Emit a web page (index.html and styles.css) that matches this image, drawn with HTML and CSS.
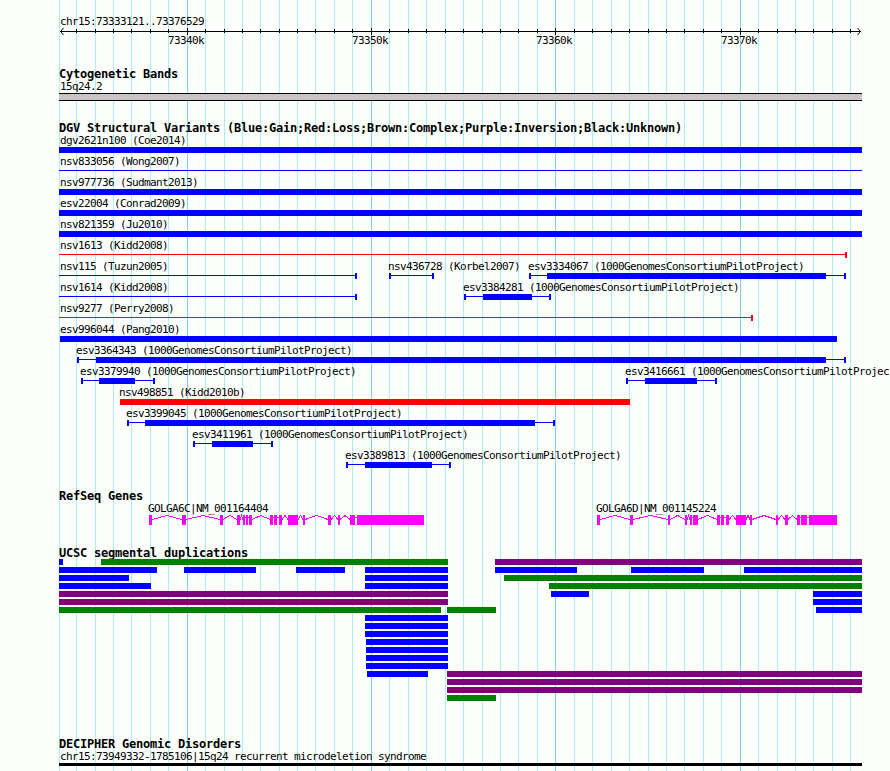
FILE: index.html
```html
<!DOCTYPE html>
<html lang="en">
<head>
    <meta charset="UTF-8">
    <title>chr15:73333121..73376529</title>
    <link rel="stylesheet" href="styles.css">
</head>
<body>
<div class="panel">
    <svg class="grid" id="grid" viewBox="59 0 830 771"></svg>

    <svg class="ruler" id="ruler" viewBox="59 0 830 68"></svg>

    <section class="track cytobands">
        <h2>Cytogenetic Bands</h2>
        <svg id="cytobands" viewBox="59 0 830 42"></svg>
    </section>

    <section class="track variants">
        <h2>DGV Structural Variants (Blue:Gain;Red:Loss;Brown:Complex;Purple:Inversion;Black:Unknown)</h2>
        <svg id="variants" viewBox="59 0 830 356"></svg>
    </section>

    <section class="track genes">
        <h2>RefSeq Genes</h2>
        <svg id="genes" viewBox="59 0 830 45"></svg>
    </section>

    <section class="track duplications">
        <h2>UCSC segmental duplications</h2>
        <svg id="duplications" viewBox="59 0 830 179"></svg>
    </section>

    <section class="track disorders">
        <h2>DECIPHER Genomic Disorders</h2>
        <svg id="disorders" viewBox="59 0 830 21"></svg>
    </section>
</div>
<script src="tracks.js"></script>
</body>
</html>
```
FILE: styles.css
```css
body {
    margin: 0;
    background: #fdfffc;
}

.panel {
    position: relative;
    box-sizing: border-box;
    width: 889px;
    height: 771px;
    padding-left: 59px;
    overflow: hidden;
}

svg {
    display: block;
    width: 830px;
    shape-rendering: crispEdges;
}

/* guide lines run behind every track */
.grid {
    position: absolute;
    top: 0;
    left: 59px;
    height: 771px;
}

.ruler {
    position: relative;
    height: 68px;
}

.track {
    position: relative;
    display: flex;
    flex-direction: column;
}

.track h2 {
    margin: 0;
    height: 12px;
    font: bold 12px/12px "DejaVu Sans Mono", monospace;
    letter-spacing: -0.225px;
    white-space: nowrap;
    color: #000;
}

.track svg {
    flex: 1;
}

.cytobands {
    height: 54px;
}

.variants {
    height: 368px;
}

.genes {
    height: 57px;
}

.duplications {
    height: 191px;
}

.disorders {
    height: 33px;
}

text {
    font: 11px "DejaVu Sans Mono", monospace;
    letter-spacing: -0.623px;
    fill: #000;
}

.minor {
    fill: #afeeee;
}

.major {
    fill: #87ceeb;
}

.band {
    fill: #c8c4c6;
}

.black {
    fill: #000;
}

.blue {
    fill: #00f;
}

.red {
    fill: #f00;
}

.green {
    fill: #008000;
}

.purple {
    fill: #800080;
}

.exon {
    fill: #f0f;
}

.intron {
    fill: none;
    stroke: #f0f;
}

.arrow {
    fill: none;
    stroke: #000;
    shape-rendering: auto;
}
```
FILE: tracks.js
```js
const LEFT = 59;
const RIGHT = 862;

const guides = [
    59, 76, 95, 113, 131, 150, 168, 187, 205, 224, 242, 260, 279, 297, 315, 334,
    352, 371, 389, 408, 426, 445, 463, 482, 500, 518, 537, 555, 574, 592, 611,
    629, 648, 666, 684, 703, 721, 740, 758, 777, 795, 813, 832, 850
];
const majors = { 187: "73340k", 371: "73350k", 555: "73360k", 740: "73370k" };

// bar: [start, end] of the thick part, line: [start, end] of the whole range
const project = "(1000GenomesConsortiumPilotProject)";
const variants = [
    [{ name: "dgv2621n100 (Coe2014)", x: 60, bar: [LEFT, RIGHT] }],
    [{ name: "nsv833056 (Wong2007)", x: 60, line: [LEFT, RIGHT] }],
    [{ name: "nsv977736 (Sudmant2013)", x: 60, bar: [LEFT, RIGHT] }],
    [{ name: "esv22004 (Conrad2009)", x: 60, bar: [LEFT, RIGHT] }],
    [{ name: "nsv821359 (Ju2010)", x: 60, bar: [LEFT, RIGHT] }],
    [{ name: "nsv1613 (Kidd2008)", x: 60, line: [LEFT, 847], color: "red" }],
    [
        { name: "nsv115 (Tuzun2005)", x: 60, line: [LEFT, 357] },
        { name: "nsv436728 (Korbel2007)", x: 388, line: [389, 434] },
        { name: `esv3334067 ${project}`, x: 528, line: [529, 846], bar: [547, 826] }
    ],
    [
        { name: "nsv1614 (Kidd2008)", x: 60, line: [LEFT, 357] },
        { name: `esv3384281 ${project}`, x: 463, line: [464, 551], bar: [483, 532] }
    ],
    [{ name: "nsv9277 (Perry2008)", x: 60, line: [LEFT, 753], color: "red" }],
    [{ name: "esv996044 (Pang2010)", x: 60, bar: [60, 837] }],
    [{ name: `esv3364343 ${project}`, x: 76, line: [77, 846], bar: [96, 826] }],
    [
        { name: `esv3379940 ${project}`, x: 80, line: [81, 155], bar: [99, 135] },
        { name: `esv3416661 ${project}`, x: 625, line: [626, 717], bar: [645, 697] }
    ],
    [{ name: "nsv498851 (Kidd2010b)", x: 119, bar: [120, 630], color: "red" }],
    [{ name: `esv3399045 ${project}`, x: 126, line: [127, 555], bar: [145, 535] }],
    [{ name: `esv3411961 ${project}`, x: 192, line: [193, 273], bar: [212, 253] }],
    [{ name: `esv3389813 ${project}`, x: 345, line: [346, 451], bar: [365, 432] }]
];

const genes = [
    {
        name: "GOLGA6C|NM_001164404", x: 148,
        exons: [[149, 152], [182, 186], [220, 223], [237, 240], [243, 245], [246, 248],
            [249, 252], [270, 273], [274, 277], [279, 282], [288, 298], [303, 305],
            [328, 331], [338, 340], [350, 355], [357, 424]]
    },
    {
        name: "GOLGA6D|NM_001145224", x: 596,
        exons: [[597, 600], [630, 633], [668, 670], [685, 687], [690, 692], [693, 698],
            [717, 720], [721, 724], [726, 729], [736, 746], [750, 752], [776, 778],
            [785, 788], [797, 800], [801, 807], [809, 837]]
    }
];

const duplications = [
    [["blue", 59, 63], ["green", 101, 448], ["purple", 495, 862]],
    [["blue", 59, 157], ["blue", 184, 256], ["blue", 296, 345], ["blue", 365, 448],
        ["blue", 495, 577], ["blue", 631, 704], ["blue", 744, 862]],
    [["blue", 59, 129], ["blue", 365, 448], ["green", 504, 862]],
    [["blue", 59, 151], ["blue", 365, 448], ["green", 549, 862]],
    [["purple", 59, 448], ["blue", 551, 589], ["blue", 813, 862]],
    [["purple", 59, 448], ["blue", 813, 862]],
    [["green", 59, 441], ["green", 447, 496], ["blue", 816, 862]],
    [["blue", 365, 448]],
    [["blue", 365, 448]],
    [["blue", 365, 448]],
    [["blue", 366, 448]],
    [["blue", 366, 448]],
    [["blue", 366, 448]],
    [["blue", 366, 448]],
    [["blue", 367, 428], ["purple", 447, 862]],
    [["purple", 447, 862]],
    [["purple", 447, 862]],
    [["green", 447, 496]]
];

function rect(cls, x1, x2, y, height) {
    return `<rect class="${cls}" x="${x1}" y="${y}" width="${x2 - x1}" height="${height}"/>`;
}

function label(text, x, y) {
    return `<text x="${x}" y="${y}">${text}</text>`;
}

function draw(id, svg) {
    document.getElementById(id).innerHTML = svg;
}

function drawGrid() {
    draw("grid", guides.map(x => rect(majors[x] ? "major" : "minor", x, x + 1, 0, 771)).join(""));
}

function drawRuler() {
    let svg = label("chr15:73333121..73376529", 60, 25);
    svg += rect("black", 60, 861, 31, 1);
    svg += `<path class="arrow" d="M63.5 28 L60.5 31.5 L63.5 35 M857.5 28 L860.5 31.5 L857.5 35"/>`;
    for (const x of guides.slice(1)) {
        if (majors[x]) {
            svg += rect("black", x, x + 1, 28, 7) + label(majors[x], x - 19, 44);
        } else {
            svg += rect("black", x, x + 1, 29, 4);
        }
    }
    draw("ruler", svg);
}

function drawVariants() {
    let svg = "";
    variants.forEach((row, i) => {
        const y = 13 + i * 21;
        for (const v of row) {
            const color = v.color ?? "blue";
            svg += label(v.name, v.x, y - 3);
            if (v.line) {
                const [start, end] = v.line;
                svg += rect(color, start, end, y + 2, 1);
                // no end cap where the range runs out of the view
                if (start > LEFT) svg += rect(color, start, start + 2, y, 6);
                if (end < RIGHT) svg += rect(color, end - 2, end, y, 6);
            }
            if (v.bar) svg += rect(color, v.bar[0], v.bar[1], y, 6);
        }
    });
    draw("variants", svg);
}

function drawGenes() {
    let svg = "";
    for (const gene of genes) {
        svg += label(gene.name, gene.x, 10);
        gene.exons.forEach(([start, end], i) => {
            svg += rect("exon", start, end, 13, 10);
            const next = gene.exons[i + 1];
            if (!next) return;
            if (next[0] - end < 3) {
                svg += rect("exon", end, next[0], 15, 1);
            } else {
                const mid = (end + next[0]) / 2;
                svg += `<path class="intron" d="M${end} 17.5 L${mid} 13.5 L${next[0]} 17.5"/>`;
            }
        });
    }
    draw("genes", svg);
}

function drawDuplications() {
    draw("duplications", duplications.map((row, i) =>
        row.map(([color, start, end]) => rect(color, start, end, i * 8, 6)).join("")
    ).join(""));
}

drawGrid();
drawRuler();
draw("cytobands", label("15q24.2", 60, 10) + rect("black", LEFT, RIGHT, 13, 8) + rect("band", LEFT, RIGHT, 14, 6));
drawVariants();
drawGenes();
drawDuplications();
draw("disorders", label("chr15:73949332-1785106|15q24 recurrent microdeletion syndrome", 60, 10) + rect("black", LEFT, RIGHT, 13, 3));
```
